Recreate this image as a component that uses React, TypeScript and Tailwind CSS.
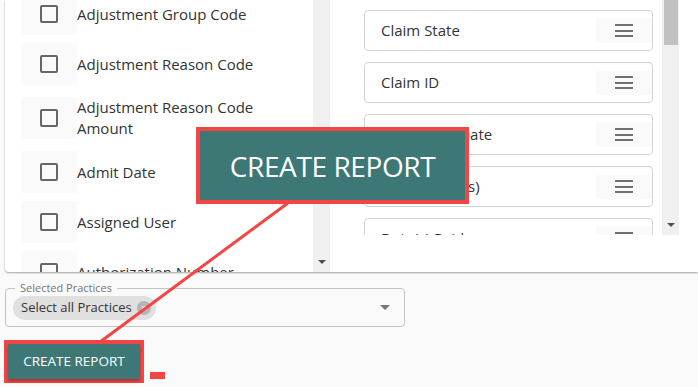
const leftItems = [
  { label: "Adjustment Group Code", tall: false },
  { label: "Adjustment Reason Code", tall: false },
  { label: "Adjustment Reason Code Amount", tall: true },
  { label: "Admit Date", tall: false },
  { label: "Assigned User", tall: false },
  { label: "Authorization Number", tall: false },
];

const rightItems = ["Claim State", "Claim ID", "Claim Sent Date", "Claim Payer(s)", "Date(s) Paid"];

function DownArrow() {
  return <div className="w-0 h-0 border-l-[4px] border-r-[4px] border-t-[4px] border-l-transparent border-r-transparent border-t-[#505050]" />;
}

function Hamburger() {
  return (
    <div className="w-[56px] h-[24px] bg-[#fafafa] flex flex-col items-center justify-center gap-[3.5px]">
      <div className="w-[18px] h-[2px] bg-[#707070]" />
      <div className="w-[18px] h-[2px] bg-[#707070]" />
      <div className="w-[18px] h-[2px] bg-[#707070]" />
    </div>
  );
}

export default function App() {
  return (
    <div className="relative w-[698px] h-[387px] overflow-hidden bg-[#fafafa] font-['Open_Sans',sans-serif] text-[#333]">
      {/* Columns card */}
      <div className="ml-[5px] h-[272px] flex bg-white rounded-bl-[4px] shadow-[0_1px_2px_rgba(0,0,0,0.35)]">
        {/* Available columns */}
        <div className="w-[308px] h-full overflow-hidden">
          <div className="-mt-[11px] pl-[16px]">
            {leftItems.map((item) => (
              <div key={item.label} className={`flex items-center ${item.tall ? "h-[58px]" : "h-[50px]"}`}>
                <div className="w-[56px] h-[42px] shrink-0 bg-[#fafafa] flex items-center justify-center">
                  <div className="w-[18px] h-[18px] border-2 border-[#666] rounded-[2px]" />
                </div>
                <div className="text-[15px] leading-[21px] w-[190px]">{item.label}</div>
              </div>
            ))}
          </div>
        </div>
        <div className="w-[17px] h-full bg-[#f0f0f0] flex flex-col justify-end items-center pb-[8px]">
          <DownArrow />
        </div>

        {/* Selected columns */}
        <div className="flex-1 h-full">
          <div className="h-[235px] flex">
            <div className="w-[332px] h-full overflow-hidden pl-[34px] pr-[9px] pt-[10px]">
              {rightItems.map((label) => (
                <div key={label} className="h-[41px] mb-[11px] border border-[#d3d3d3] rounded-[4px] flex items-center justify-between pl-[16px]">
                  <span className="text-[15px]">{label}</span>
                  <Hamburger />
                </div>
              ))}
            </div>
            <div className="w-[17px] h-full bg-[#f0f0f0] flex flex-col justify-between items-center pb-[8px]">
              <div className="w-[14px] h-[45px] bg-[#c1c1c1]" />
              <DownArrow />
            </div>
          </div>
        </div>
      </div>

      {/* Bottom form */}
      <div className="pt-[16px] pl-[5px]">
        <div className="relative w-[400px] h-[39px] border border-[#c4c4c4] rounded-[4px] flex items-center justify-between pl-[7px] pr-[14px]">
          <span className="absolute -top-[8px] left-[9px] px-[5px] bg-[#fafafa] text-[11px] leading-[14px] text-[#757575]">
            Selected Practices
          </span>
          <div className="h-[24px] rounded-full bg-[#e0e0e0] flex items-center pl-[8px] pr-[5px] gap-[5px]">
            <span className="text-[13px]">Select all Practices</span>
            <div className="w-[14px] h-[14px] rounded-full bg-[#b5b5b5] flex items-center justify-center text-white text-[9px] leading-none">
              ×
            </div>
          </div>
          <div className="w-0 h-0 border-l-[5px] border-r-[5px] border-t-[5px] border-l-transparent border-r-transparent border-t-[#757575]" />
        </div>

        <div className="mt-[13px] flex items-end gap-[6px]">
          <div className="-ml-[1px] border-[4px] border-[#f44545]">
            <button className="w-[132px] h-[35px] bg-[#3e7876] text-white text-[13.5px] shadow-[0_2px_3px_rgba(0,0,0,0.3)]">
              CREATE REPORT
            </button>
          </div>
          <div className="w-[15px] h-[7px] bg-[#f44545] mb-[4px]" />
        </div>
      </div>

      {/* Callout overlay */}
      <svg className="absolute inset-0 pointer-events-none" width="698" height="387">
        <line x1="288" y1="203" x2="100" y2="342" stroke="#f44545" strokeWidth="3" />
      </svg>
      <div className="absolute left-[196px] top-[127px] w-[273px] h-[77px] border-[4px] border-[#f44545] bg-[#3e7876] flex items-center justify-center">
        <span className="text-white text-[28px] font-medium tracking-[-0.4px]">CREATE REPORT</span>
      </div>
    </div>
  );
}
